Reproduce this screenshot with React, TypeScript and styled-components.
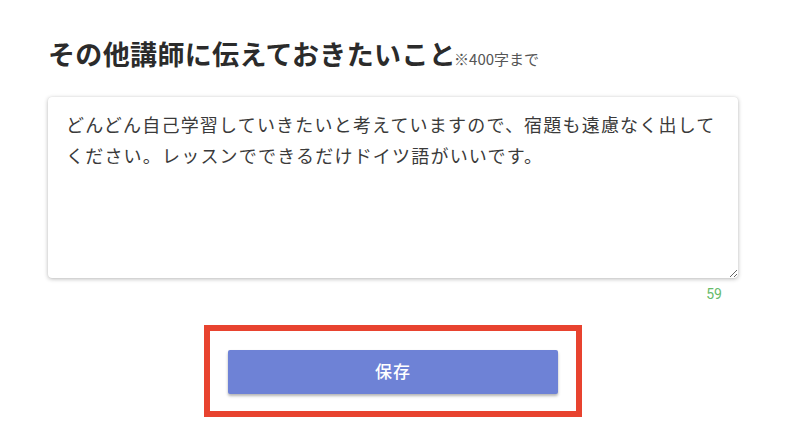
import React from "react";
import styled, { createGlobalStyle } from "styled-components";

const Global = createGlobalStyle`
  html, body { margin: 0; padding: 0; background: #fff; }
  body { font-family: "Noto Sans CJK JP", "Noto Sans", sans-serif; }
`;

const Page = styled.div`
  width: 800px;
  height: 439px;
  box-sizing: border-box;
  padding: 34px 62px 0 48px;
  display: flex;
  flex-direction: column;
`;

const Heading = styled.h2`
  margin: 0;
  display: flex;
  align-items: baseline;
  font-size: 27px;
  line-height: 40px;
  font-weight: 700;
  color: #2b2b2b;
  letter-spacing: 0.35px;
`;

const Note = styled.span`
  font-size: 15px;
  font-weight: 400;
  color: #555;
  margin-left: -2px;
  letter-spacing: 0;
`;

const Field = styled.div`
  margin-top: 18px;
  display: flex;
  flex-direction: column;
`;

const TextArea = styled.textarea`
  box-sizing: border-box;
  width: 690px;
  height: 181px;
  border: none;
  border-radius: 4px;
  padding: 12px 18px;
  font-family: "Noto Sans CJK JP", sans-serif;
  font-size: 18px;
  letter-spacing: 1.2px;
  line-height: 31px;
  color: #3a3a3a;
  background: #fff;
  box-shadow: 0 1px 4px rgba(0, 0, 0, 0.28), 0 0 1px rgba(0, 0, 0, 0.1);
  resize: vertical;
  outline: none;
`;

const Counter = styled.div`
  align-self: flex-end;
  margin-right: 16px;
  margin-top: 8px;
  font-family: Roboto, "Noto Sans", sans-serif;
  font-size: 14px;
  line-height: 16px;
  color: #66bb6a;
`;

const Actions = styled.div`
  width: 690px;
  display: flex;
  justify-content: center;
  margin-top: 23px;
`;

const Highlight = styled.div`
  box-sizing: border-box;
  width: 378px;
  height: 92px;
  border: 6px solid #e8432f;
  padding: 19px 18px 0;
`;

const SaveButton = styled.button`
  width: 330px;
  height: 44px;
  border: none;
  border-radius: 2px;
  padding: 0 0 4px;
  background: #6e82d6;
  color: #fff;
  font-family: "Noto Sans CJK JP", sans-serif;
  font-size: 17px;
  font-weight: 500;
  letter-spacing: 1px;
  box-shadow: 0 2px 3px rgba(0, 0, 0, 0.3);
  cursor: pointer;
`;

const text =
  "どんどん自己学習していきたいと考えていますので、宿題も遠慮なく出してください。レッスンでできるだけドイツ語がいいです。";

export default function App() {
  return (
    <>
      <Global />
      <Page>
        <Heading>
          その他講師に伝えておきたいこと<Note>※400字まで</Note>
        </Heading>
        <Field>
          <TextArea defaultValue={text} />
          <Counter>59</Counter>
        </Field>
        <Actions>
          <Highlight>
            <SaveButton>保存</SaveButton>
          </Highlight>
        </Actions>
      </Page>
    </>
  );
}
